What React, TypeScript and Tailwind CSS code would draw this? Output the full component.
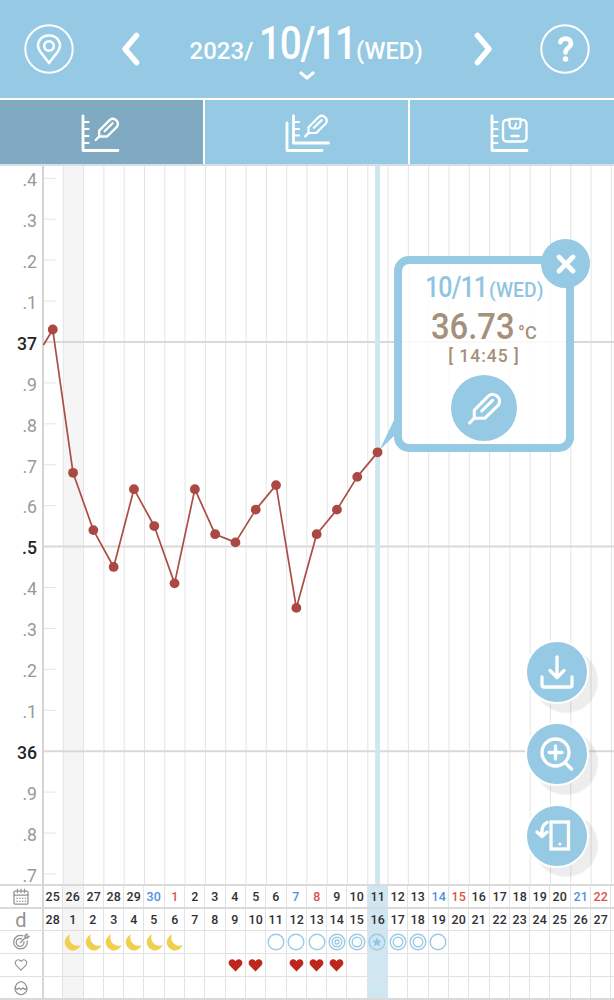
import React from "react";

const FONT = "font-[Roboto,'Liberation_Sans',sans-serif]";
const X0 = 43;
const STEP = 20.3;
const GRID = Array.from({ length: 28 }, (_, i) => X0 + STEP * (i + 1));

const axis = [".4", ".3", ".2", ".1", "37", ".9", ".8", ".7", ".6", ".5", ".4", ".3", ".2", ".1", "36", ".9", ".8", ".7"];
const strong = new Set([4, 9, 14]);

const temps = [37.03, 36.68, 36.54, 36.45, 36.64, 36.55, 36.41, 36.64, 36.53, 36.51, 36.59, 36.65, 36.35, 36.53, 36.59, 36.67, 36.73];
const points = temps.map((t, i) => ({ x: X0 + STEP * (i + 0.5) - 0.4, y: 175.8 + (37 - t) * 409.4 }));

const dates = [25, 26, 27, 28, 29, 30, 1, 2, 3, 4, 5, 6, 7, 8, 9, 10, 11, 12, 13, 14, 15, 16, 17, 18, 19, 20, 21, 22];
const days = [28, ...Array.from({ length: 27 }, (_, i) => i + 1)];
const blue = new Set([5, 12, 19, 26]);
const red = new Set([6, 13, 20, 27]);

function Thermometer() {
  return (
    <g fill="none" stroke="currentColor" strokeWidth="3.100" strokeLinecap="round" strokeLinejoin="round">
      <path d="M1.600 30.400 L6.500 25.500" />
      <path d="M6.300 25.700 V17.700 L20.800 3.200 A6.800 6.800 0 0 1 30.300 12.600 L17 25.700 Z" />
      <path d="M13.700 18.500 L24.500 7.800" />
    </g>
  );
}

function ChartIcon({ kind }: { kind: "temp" | "layers" | "weight" }) {
  return (
    <svg width="46" height="42" viewBox="0 0 46 42" fill="none" stroke="white" strokeWidth="2.800" strokeLinecap="round" className="text-white">
      {kind === "layers" ? (
        <>
          <path d="M3 10 V37.500 H38" strokeLinejoin="round" />
          <path d="M9.500 3 V30 H44.500" strokeLinejoin="round" />
          <path d="M11 9 H15 M11 16 H15 M11 22.500 H15" strokeWidth="2.200" />
        </>
      ) : (
        <>
          <path d="M3 3 V37.500 H38" strokeLinejoin="round" />
          <path d="M4 9 H8.500 M4 16 H8.500 M4 23 H8.500 M4 30 H8.500" strokeWidth="2.200" />
        </>
      )}
      {kind === "weight" ? (
        <>
          <rect x="14" y="7" width="23.500" height="21.500" rx="3.500" strokeWidth="2.400" />
          <path d="M20.500 5.800 H31.500 V11.500 Q31.500 15.500 28 15.500 H24 Q20.500 15.500 20.500 11.500 Z" fill="#95c9e4" strokeWidth="2.200" strokeLinejoin="round" />
          <path d="M25.800 14.500 L27.200 10.500" strokeWidth="2" />
          <path d="M22.500 23 H29.500" strokeWidth="2.400" />
        </>
      ) : (
        <g transform={kind === "layers" ? "translate(20 1.5) scale(.72)" : "translate(14.5 4.500) scale(.74)"}><Thermometer /></g>
      )}
    </svg>
  );
}

function Header() {
  return (
    <header className="flex h-[98px] items-center bg-[#95c9e4] px-6 text-white">
      <svg width="50" height="50" viewBox="0 0 50 50" fill="none" stroke="currentColor">
        <circle cx="25" cy="25" r="23.700" strokeWidth="2" />
        <path d="M25 39 L16.500 28 C10.500 19.500 16.500 11.500 25 11.500 C33.500 11.500 39.500 19.500 33.500 28 Z" strokeWidth="2.600" strokeLinejoin="round" />
        <circle cx="25" cy="22" r="4.800" strokeWidth="2.600" />
      </svg>
      <svg className="ml-[46px]" width="22" height="36" viewBox="0 0 22 36" fill="none" stroke="currentColor" strokeWidth="5.600" strokeLinecap="round" strokeLinejoin="round">
        <path d="M16.500 4.500 L5 18 L16.500 31.500" />
      </svg>
      <div className="relative flex flex-1 items-baseline justify-center whitespace-nowrap pb-[13px] font-medium leading-none">
        <span className="text-[24px]">2023/</span>
        <span className="ml-[6px] w-[97px] origin-left scale-x-[.84] text-[46px] tracking-[-1.500px]">10/11</span>
        <span className="w-[68px] origin-left scale-x-[.97] text-[24.500px]">(WED)</span>
        <svg className="absolute bottom-[-2px] left-1/2 -translate-x-1/2" width="18" height="10" viewBox="0 0 18 10" fill="none" stroke="currentColor" strokeWidth="3.200" strokeLinecap="round" strokeLinejoin="round">
          <path d="M3 2 L9 7 L15 2" />
        </svg>
      </div>
      <svg className="mr-[46px]" width="22" height="36" viewBox="0 0 22 36" fill="none" stroke="currentColor" strokeWidth="5.600" strokeLinecap="round" strokeLinejoin="round">
        <path d="M5.500 4.500 L17 18 L5.500 31.500" />
      </svg>
      <svg width="50" height="50" viewBox="0 0 50 50" fill="none" stroke="currentColor">
        <circle cx="25" cy="25" r="23.700" strokeWidth="2" />
        <path d="M20.300 18.200 C20.800 13.500 31 13 31 19.300 C31 24 25.500 23.500 25.500 28.500" strokeWidth="4.600" strokeLinecap="round" />
        <circle cx="25.500" cy="35" r="2.800" fill="currentColor" stroke="none" />
      </svg>
    </header>
  );
}

function Chart() {
  return (
    <main className="flex h-[718px]">
      <div className="h-[718px] w-[42px] shrink-0 pr-[5px] text-right">
        {axis.map((label, i) => (
          <div key={i} className={i === 17 ? "h-[21px] pt-[7.2px]" : "h-[40.92px] pt-[7.2px]"}>
            <span className={strong.has(i) ? "block origin-right scale-x-[.93] text-[19px] font-medium leading-[14px] text-[#252527]" : "block origin-right scale-x-[.93] text-[19px] leading-[14px] text-[#98999b]"}>{label}</span>
          </div>
        ))}
      </div>
      <svg width="572" height="718" viewBox="42 0 572 718" fill="none">
        <rect x="63.300" y="0" width="20.300" height="718" fill="#f5f5f5" />
        {GRID.map((x) => <path key={x} d={`M${x} 0V718`} stroke="#e4e4e5" />)}
        {axis.map((_, i) => {
          const y = 12.3 + i * 40.92;
          return strong.has(i) ? <path key={i} d={`M43 ${y}H614`} stroke="#d9d9da" strokeWidth="2" /> : <path key={i} d={`M43 ${y}H56`} stroke="#e5e5e6" />;
        })}
        <path d="M43 0V718" stroke="#d4d4d5" strokeWidth="2" />
        <path d="M377.600 0V718" stroke="#d0e7f1" strokeWidth="5" />
        <path d="M379.500 284 L395 252 L398 266 Z" fill="#95c9e4" />
        <polyline points={`43.5,179 ${points.map((p) => `${p.x},${p.y}`).join(" ")}`} stroke="#ac4d45" strokeWidth="1.700" strokeLinejoin="round" />
        {points.map((p) => <circle key={p.x} cx={p.x} cy={p.y} r="4.900" fill="#ab4842" />)}
      </svg>
    </main>
  );
}

function Popup() {
  return (
    <div className="absolute left-[394px] top-[256px] h-[196px] w-[180px] rounded-[15px] border-[8px] border-[#95c9e4] bg-white/85">
      <div className="flex flex-col items-center whitespace-nowrap font-medium leading-none">
        <div className="mt-[9px] flex h-7 items-baseline text-[#8fc5e3]">
          <span className="w-[64px] origin-left scale-x-[.86] text-[29px] tracking-[-1px]">10/11</span>
          <span className="w-[54px] origin-left scale-x-[.97] text-[20px]">(WED)</span>
        </div>
        <div className="mt-[9px] flex h-[34px] items-baseline text-[#a59079]">
          <span className="w-[87px] origin-left scale-x-[.91] text-[36px] leading-[34px]">36.73</span>
          <span className="w-5 origin-left scale-x-95 text-[19px]">°C</span>
        </div>
        <div className="mt-[4px] text-[17.500px] tracking-[1px] text-[#a59079]">[ 14:45 ]</div>
        <div className="mt-[9.500px] flex size-[66px] items-center justify-center rounded-full bg-[#95c9e4] text-white">
          <svg width="33" height="33" viewBox="0 -.5 33 33"><Thermometer /></svg>
        </div>
      </div>
      <div className="absolute -right-[24px] -top-[25px] flex size-[49px] items-center justify-center rounded-full bg-[#95c9e4]">
        <svg width="24" height="24" viewBox="0 0 24 24" stroke="white" strokeWidth="4.800" strokeLinecap="round"><path d="M5 5 L19 19 M19 5 L5 19" /></svg>
      </div>
    </div>
  );
}

function FloatingButton({ children }: { children: React.ReactNode }) {
  return (
    <div className="flex size-[64px] items-center justify-center rounded-full border-2 border-white bg-[#95c9e4] shadow-[9px_9px_1px_rgba(0,0,0,0.07)]">
      <svg width="44" height="44" viewBox="0 0 44 44" fill="none" stroke="white" strokeWidth="3.300" strokeLinecap="round" strokeLinejoin="round">{children}</svg>
    </div>
  );
}

function Marker({ i }: { i: number }) {
  if (i >= 1 && i <= 6) return <svg width="17" height="17" viewBox="0 0 17 17"><path d="M6 .6 A8.200 8.200 0 1 0 16.700 11 A8 8 0 0 1 6 .6Z" fill="#f0d04d" /></svg>;
  if (i < 11 || i > 19) return null;
  return (
    <svg width="18" height="18" viewBox="0 0 18 18" fill="none" stroke="#9bcbe2" strokeWidth="1.400">
      <circle cx="9" cy="9" r="7.800" />
      {[14, 15, 17, 18].includes(i) && <circle cx="9" cy="9" r="4.800" />}
      {i === 14 && <circle cx="9" cy="9" r="2" />}
      {i === 16 && <path d="M9 4.200 L10.400 7.400 L13.800 7.700 L11.200 9.900 L12 13.300 L9 11.500 L6 13.300 L6.800 9.900 L4.200 7.700 L7.600 7.400Z" fill="#91c6e0" stroke="none" />}
    </svg>
  );
}

const heartPath = "M7 12.500 L1.500 7 C-1 4 2 .3 5 1.300 Q6.500 1.800 7 3 Q7.500 1.800 9 1.300 C12 .3 15 4 12.500 7Z";

function RowIcon({ row }: { row: number }) {
  if (row === 1) return <span className="text-[20px] leading-none text-[#929395]">d</span>;
  return (
    <svg width="18" height="18" viewBox="0 0 18 18" fill="none" stroke="#929395" strokeWidth="1.250" strokeLinecap="round" strokeLinejoin="round">
      {row === 0 && <><rect x="2" y="3" width="14" height="13" rx="1" /><path d="M2 7H16M5.500 1V4.500M9 1V4.500M12.500 1V4.500" /><path d="M5 10.200H13.500M5 13.200H13.500" strokeWidth="1.500" strokeDasharray=".1 2.700" /></>}
      {row === 2 && <><path d="M11 2.800 A6.800 6.800 0 1 0 15.200 8" /><path d="M10 6 A3.900 3.900 0 1 0 12 9" /><path d="M8.300 9.700 L14 4 M13 5 V2.500 L15 .8 V3 L17.300 3.300 L15.500 5 H13" /></>}
      {row === 3 && <path d={heartPath} transform="translate(2.700 2.800) scale(.9)" />}
      {row === 4 && <><path d="M9 2.500 C6 2.500 3 6.500 3 9.700 A6 5.800 0 0 0 15 9.700 C15 6.500 12 2.500 9 2.500Z" /><path d="M3.200 9 L5 10.500 L7 9 L9 10.500 L11 9 L13 10.500 L14.800 9" /></>}
    </svg>
  );
}

const rowClass = [
  "flex h-[23px] border-b-2 border-[#dadadb]",
  "flex h-[22px] border-b border-[#e1e1e2]",
  "flex h-[23px] border-b border-[#e1e1e2]",
  "flex h-[23px] border-b border-[#e1e1e2]",
  "flex h-[23px] border-b-2 border-[#dadadb]",
];

function CalendarTable() {
  return (
    <section className="h-[116px] border-t-2 border-[#dadadb] text-[#303033]">
      {rowClass.map((className, row) => (
        <div key={row} className={className}>
          <div className="flex w-[44px] shrink-0 items-center justify-center border-r-2 border-[#d7d7d8]"><RowIcon row={row} /></div>
          <div className="-ml-px grid grid-cols-[repeat(28,20.3px)]">
            {dates.map((date, i) => (
              <div key={i} className={i === 16 ? "flex items-center justify-center border-r border-[#d0e7f1] bg-[#d0e7f1]" : i === 1 ? "flex items-center justify-center border-r border-[#e3e3e4] bg-[#f5f5f5]" : "flex items-center justify-center border-r border-[#e3e3e4]"}>
                {row === 0 && <span className={blue.has(i) ? "scale-x-[.92] text-[13.500px] font-medium leading-none text-[#4c93df]" : red.has(i) ? "scale-x-[.92] text-[13.500px] font-medium leading-none text-[#dc5149]" : "scale-x-[.92] text-[13.500px] font-medium leading-none"}>{date}</span>}
                {row === 1 && <span className="scale-x-[.92] text-[13.500px] font-medium leading-none">{days[i]}</span>}
                {row === 2 && <Marker i={i} />}
                {row === 3 && [9, 10, 12, 13, 14].includes(i) && <svg width="15" height="14" viewBox="0 0 14 13"><path d={heartPath} fill="#bf271d" /></svg>}
              </div>
            ))}
          </div>
        </div>
      ))}
    </section>
  );
}

export default function App() {
  return (
    <div className={`relative h-[1000px] w-[614px] overflow-hidden bg-white ${FONT}`}>
      <Header />
      <nav className="flex h-[68px] border-b-2 border-t-2 border-b-[#d5dfe4] border-t-white bg-[#95c9e4]">
        <div className="flex w-[205px] items-center justify-center border-r-2 border-white bg-[#7faac2] pl-[3px] pt-[4px]"><ChartIcon kind="temp" /></div>
        <div className="flex w-[205px] items-center justify-center border-r-2 border-white pt-[4px]"><ChartIcon kind="layers" /></div>
        <div className="flex flex-1 items-center justify-center pt-[4px]"><ChartIcon kind="weight" /></div>
      </nav>
      <Chart />
      <CalendarTable />
      <Popup />
      <div className="absolute left-[525px] top-[640px] flex flex-col gap-[18px]">
        <FloatingButton><path d="M22 7V27M15 20.500L22 27.500L29 20.500M7 27V35Q7 37 9 37H35Q37 37 37 35V27" /></FloatingButton>
        <FloatingButton><circle cx="20.500" cy="20.500" r="13.500" /><path d="M30.500 31L36.500 37M14 20.500H27M20.500 14V27" /></FloatingButton>
        <FloatingButton><rect x="16" y="8" width="17.500" height="27" strokeLinejoin="miter" /><circle cx="24.800" cy="30" r="1.500" fill="white" stroke="none" /><path d="M12 8.500Q6 11 7 22M2 18L7 22.500L12 18" /></FloatingButton>
      </div>
    </div>
  );
}
